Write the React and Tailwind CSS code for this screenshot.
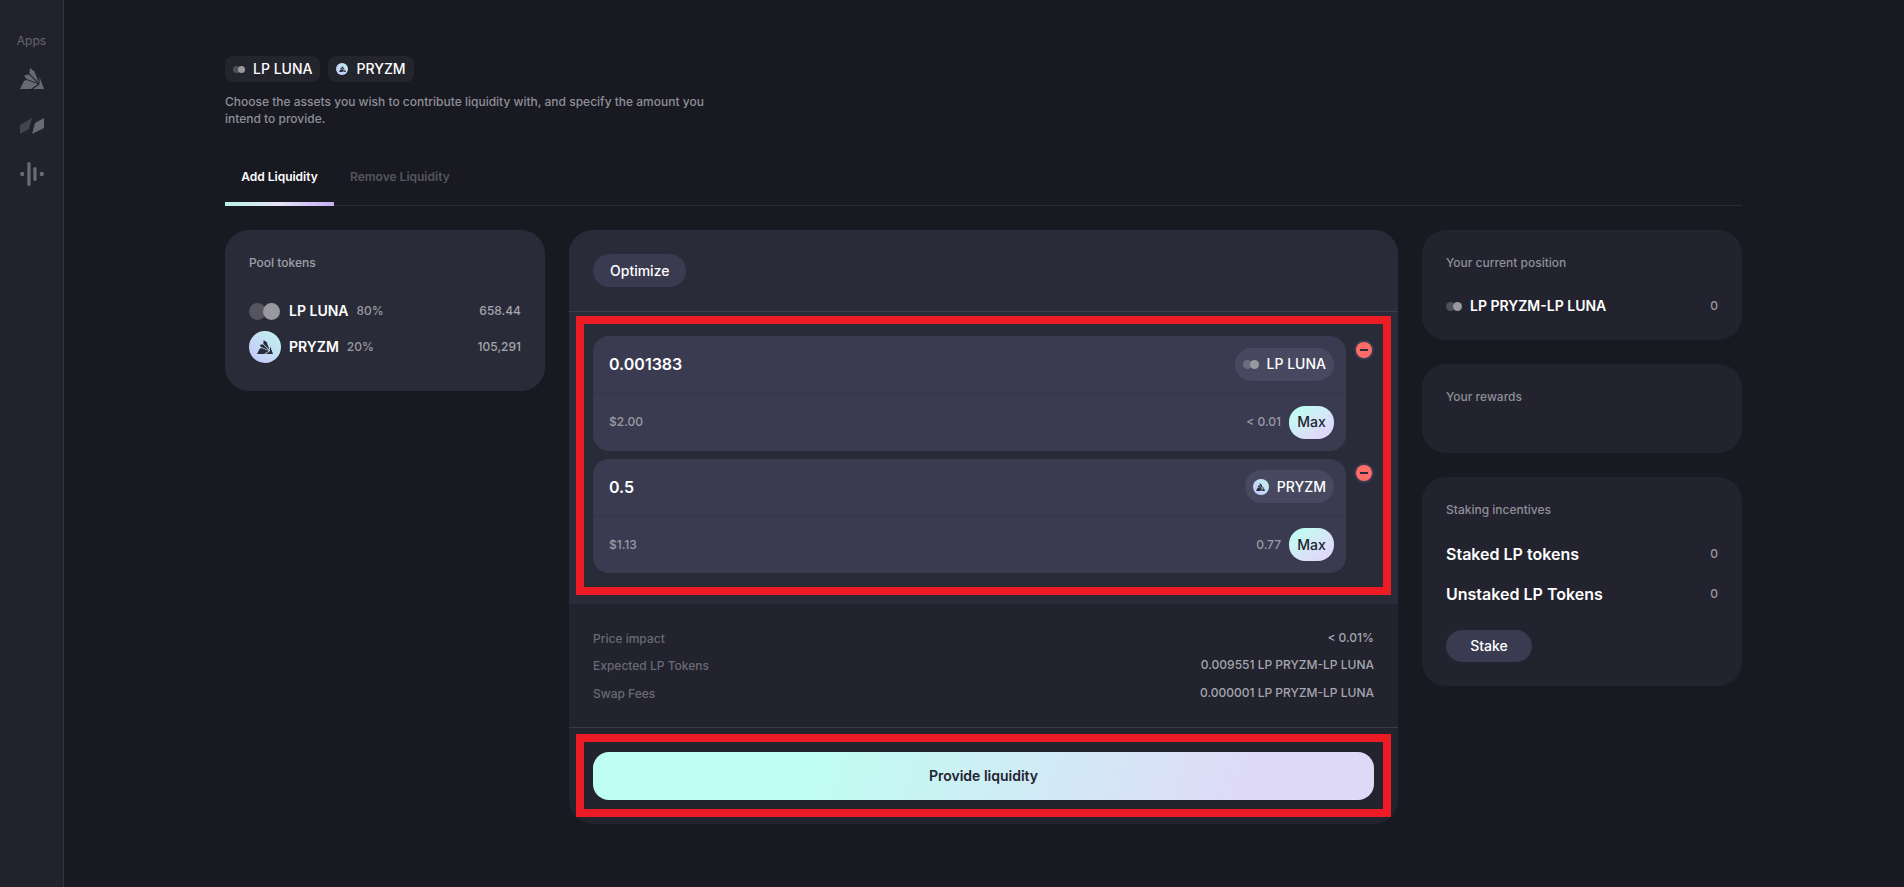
import React from 'react';

const font = { fontFamily: 'Inter, "Noto Sans", sans-serif' };

const PryzmLogo = ({ className }) => (
  <svg viewBox="0 0 24 21" className={className} fill="currentColor">
    <path d="M10 0 L14.5 3.5 L19 15 L9.5 5.5 Z" />
    <path d="M4 7.5 L8.8 6.5 L17.5 15 L6.5 11 Z" />
    <path d="M0 21 L4 13 L6.5 12 L18 16 L11 21 Z" />
    <path d="M19.5 9 L24 21 L13 21 L19.5 16.5 Z" />
  </svg>
);

const lunaSizes = {
  tiny: { box: 'w-[12px] h-[7px]', coin: 'w-[7px] h-[7px]' },
  small: { box: 'w-[16px] h-[9px]', coin: 'w-[9px] h-[9px]' },
  big: { box: 'w-[31px] h-[17px]', coin: 'w-[17px] h-[17px]' },
};

const LunaCoin = ({ size = 'small' }) => (
  <span className={`relative inline-block shrink-0 ${lunaSizes[size].box}`}>
    <span className={`absolute left-0 top-0 rounded-full bg-white/20 ${lunaSizes[size].coin}`} />
    <span className={`absolute right-0 top-0 rounded-full bg-[#98989e] ${lunaSizes[size].coin}`} />
  </span>
);

const pryzmSizes = {
  tiny: { box: 'w-3 h-3', logo: 'w-[7px] h-[6px]' },
  small: { box: 'w-4 h-4', logo: 'w-[9px] h-[8px]' },
  big: { box: 'w-8 h-8', logo: 'w-[16px] h-[14px]' },
};

const PryzmCoin = ({ size = 'small' }) => (
  <span className={`rounded-full shrink-0 flex items-center justify-center bg-gradient-to-tr from-[#c4c4ff] to-[#c2f5ea] ${pryzmSizes[size].box}`}>
    <PryzmLogo className={`text-[#2b2c3a] ${pryzmSizes[size].logo}`} />
  </span>
);

const Chip = ({ icon, label }) => (
  <div className="h-[26px] px-2 rounded-lg bg-[#24242d] flex items-center gap-[8px]">
    {icon}
    <span className="text-sm font-medium text-white">{label}</span>
  </div>
);

const TokenInput = ({ value, usd, balance, icon, label }) => (
  <div className="w-[753px] rounded-[16px] bg-[#3a3a50]">
    <div className="h-[57.5px] pl-4 pr-3 flex items-center justify-between border-b border-[#34344a]">
      <span className="text-base font-semibold text-white">{value}</span>
      <div className="h-[33px] px-2 rounded-full bg-[#484860] flex items-center gap-[8px]">
        {icon}
        <span className="text-sm font-medium text-white">{label}</span>
      </div>
    </div>
    <div className="h-[57px] pl-4 pr-3 flex items-center justify-between">
      <span className="text-xs font-medium text-[#9a9aa4]">{usd}</span>
      <div className="flex items-center gap-2">
        <span className="text-xs font-medium text-[#9a9aa4]">{balance}</span>
        <button className="w-[45px] h-[33px] rounded-[16px] bg-gradient-to-br from-[#bdfff2] from-10% to-[#e0d8fa] to-80% text-sm font-medium text-[#22232e]">Max</button>
      </div>
    </div>
  </div>
);

const MinusButton = () => (
  <div className="w-5 h-5 rounded-full bg-[#3a3a50] flex items-center justify-center">
    <div className="w-4 h-4 rounded-full bg-[#ff6b66] flex items-center justify-center">
      <div className="w-2 h-[2px] bg-[#2a2b38]" />
    </div>
  </div>
);

const InfoRow = ({ label, value }) => (
  <div className="h-[27.5px] flex items-center justify-between text-xs font-medium">
    <span className="text-[#6a6a74]">{label}</span>
    <span className="pb-[2px] text-[#a6a6ae]">{value}</span>
  </div>
);

export default function App() {
  return (
    <div style={font} className="min-h-[887px] h-[887px] overflow-hidden flex bg-[#191921]">
      <aside className="w-16 shrink-0 bg-[#22222c] border-r border-[#34343e] flex flex-col items-center pt-[33px]">
        <span className="text-xs text-[#66666e] leading-4">Apps</span>
        <PryzmLogo className="w-6 h-[21px] mt-[19px] text-[#686972]" />
        <svg viewBox="0 0 24 16" className="w-6 h-4 mt-[29px]">
          <path d="M0 7 L12 0 L9 11 L0 16 Z" fill="#43444e" />
          <path d="M12 16 L15 5 L24 0 L24 10 Z" fill="#686972" />
        </svg>
        <svg viewBox="0 0 24 24" className="w-6 h-6 mt-[28px]" fill="#686972">
          <circle cx="2.2" cy="12" r="2.2" />
          <rect x="7.3" y="0" width="3.3" height="24" rx="1.6" />
          <rect x="13.3" y="5" width="3.3" height="14" rx="1.6" />
          <circle cx="21.8" cy="12" r="2.2" />
        </svg>
      </aside>

      <main className="flex-1 pl-[161px] pr-[162px] pt-14">
        <div className="flex gap-2">
          <Chip icon={<LunaCoin size="tiny" />} label="LP LUNA" />
          <Chip icon={<PryzmCoin size="tiny" />} label="PRYZM" />
        </div>
        <p className="w-[500px] mt-[11px] text-xs font-medium leading-[17px] text-[#8f8f98]">
          Choose the assets you wish to contribute liquidity with, and specify the amount you intend to provide.
        </p>

        <div className="mt-6 flex border-b border-[#2b2b35]">
          <div className="relative h-[54px] pb-[2px] w-[109px] flex items-center justify-center text-xs font-semibold text-white">
            Add Liquidity
            <div className="absolute left-0 right-0 -bottom-px h-1 bg-gradient-to-r from-[#b5f5e6] via-[#e6e2f8] to-[#c5aff5]" />
          </div>
          <div className="h-[54px] pb-[2px] pl-4 flex items-center text-xs font-semibold text-[#55555e]">Remove Liquidity</div>
        </div>

        <div className="mt-6 flex gap-6 items-start">
          <section className="w-[320px] h-[161px] rounded-[24px] bg-[#2a2b38] px-6 pt-[25px]">
            <h3 className="text-xs leading-4 font-medium text-[#a0a0a8]">Pool tokens</h3>
            <div className="mt-[22px] h-[36px] flex items-center">
              <LunaCoin size="big" />
              <span className="ml-[9px] text-sm font-semibold text-white">LP LUNA</span>
              <span className="ml-2 text-xs font-medium text-[#9a9aa2]">80%</span>
              <span className="ml-auto text-xs font-medium text-[#a6a6ae]">658.44</span>
            </div>
            <div className="h-[36px] flex items-center">
              <PryzmCoin size="big" />
              <span className="ml-2 text-sm font-semibold text-white">PRYZM</span>
              <span className="ml-2 text-xs font-medium text-[#9a9aa2]">20%</span>
              <span className="ml-auto text-xs font-medium text-[#a6a6ae]">105,291</span>
            </div>
          </section>

          <section className="w-[829px] h-[594px] rounded-[24px] overflow-hidden bg-[#22232e] flex flex-col">
            <div className="h-[82px] shrink-0 bg-[#2a2b38] border-b border-[#3c3d48] px-6 flex items-center">
              <button className="h-[33px] px-[17px] rounded-full bg-[#3a3a50] text-sm font-medium text-white">Optimize</button>
            </div>
            <div className="relative h-[292px] shrink-0 bg-[#2a2b38] px-6 pt-6 flex flex-col gap-2">
              <div className="flex gap-2">
                <TokenInput value="0.001383" usd="$2.00" balance="< 0.01" icon={<LunaCoin />} label="LP LUNA" />
                <div className="pt-1"><MinusButton /></div>
              </div>
              <div className="flex gap-2">
                <TokenInput value="0.5" usd="$1.13" balance="0.77" icon={<PryzmCoin />} label="PRYZM" />
                <div className="pt-1"><MinusButton /></div>
              </div>
              <div className="absolute left-[7px] right-[7px] top-[4px] bottom-[9px] border-8 border-[#ed1c24]" />
            </div>
            <div className="h-[124px] shrink-0 px-6 pt-[21px] border-b border-[#3a3b46]">
              <InfoRow label="Price impact" value="< 0.01%" />
              <InfoRow label="Expected LP Tokens" value="0.009551 LP PRYZM-LP LUNA" />
              <InfoRow label="Swap Fees" value="0.000001 LP PRYZM-LP LUNA" />
            </div>
            <div className="relative flex-1 px-6 pt-6">
              <button className="w-full h-12 rounded-[16px] bg-linear-110 from-[#bdfff2] from-25% to-[#dfd9f8] to-85% text-sm font-semibold text-[#22232e]">Provide liquidity</button>
              <div className="absolute left-[7px] right-[7px] top-[6px] bottom-[7px] border-8 border-[#ed1c24]" />
            </div>
          </section>

          <div className="w-[320px] flex flex-col gap-6">
            <section className="h-[110px] rounded-[24px] bg-[#22232e] px-6 pt-[25px]">
              <h3 className="text-xs leading-4 font-medium text-[#8f8f98]">Your current position</h3>
              <div className="mt-[25px] flex items-center justify-between">
                <div className="flex items-center gap-2">
                  <LunaCoin />
                  <span className="text-sm font-semibold text-white">LP PRYZM-LP LUNA</span>
                </div>
                <span className="text-xs font-medium text-[#9a9aa2]">0</span>
              </div>
            </section>
            <section className="h-[89px] rounded-[24px] bg-[#22232e] px-6 pt-[25px]">
              <h3 className="text-xs leading-4 font-medium text-[#8f8f98]">Your rewards</h3>
            </section>
            <section className="h-[209px] rounded-[24px] bg-[#22232e] px-6 pt-[25px]">
              <h3 className="text-xs leading-4 font-medium text-[#8f8f98]">Staking incentives</h3>
              <div className="mt-[26px] flex items-center justify-between h-5">
                <span className="text-base font-semibold text-white">Staked LP tokens</span>
                <span className="text-xs font-medium text-[#9a9aa2]">0</span>
              </div>
              <div className="mt-5 flex items-center justify-between h-5">
                <span className="text-base font-semibold text-white">Unstaked LP Tokens</span>
                <span className="text-xs font-medium text-[#9a9aa2]">0</span>
              </div>
              <button className="mt-[26px] w-[86px] h-8 rounded-full bg-[#3a3a50] text-sm font-medium text-white">Stake</button>
            </section>
          </div>
        </div>
      </main>
    </div>
  );
}
